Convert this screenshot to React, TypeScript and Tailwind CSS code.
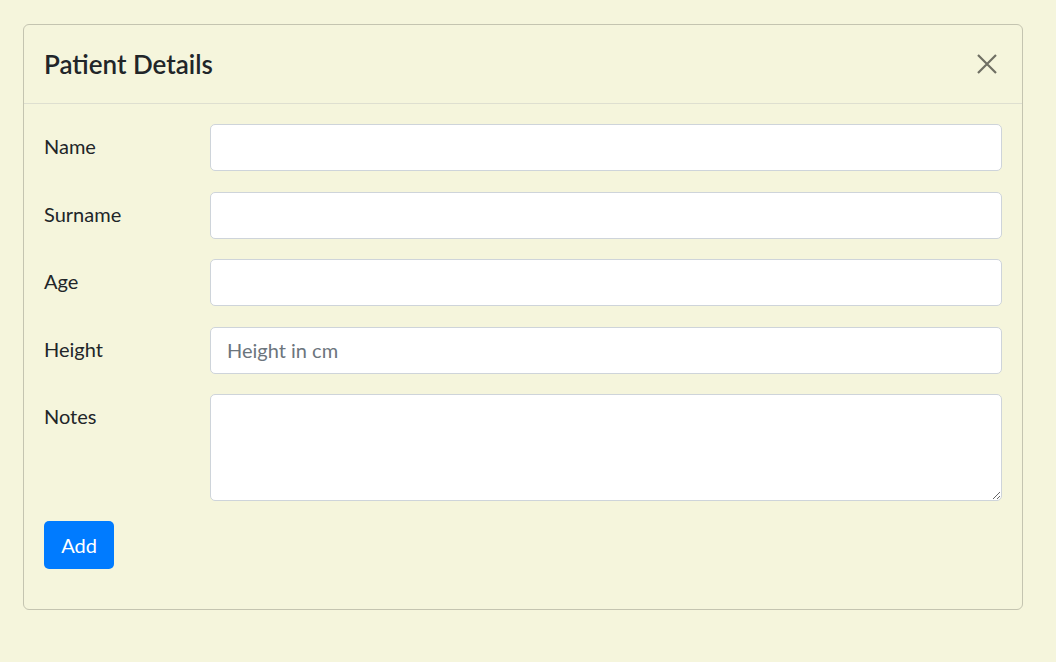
const fields = [
  { label: 'Name', placeholder: '' },
  { label: 'Surname', placeholder: '' },
  { label: 'Age', placeholder: '' },
  { label: 'Height', placeholder: 'Height in cm' },
];

export default function App() {
  return (
    <div
      className="min-h-[662px] bg-[#f5f5dc] pt-[24px] pl-[23px] text-[#212529]"
      style={{ fontFamily: 'Lato, "Noto Sans", sans-serif' }}
    >
      <div className="w-[1000px] rounded-[6px] border border-[#c4c4b0]">
        <div className="flex h-[79px] items-center justify-between border-b border-[#dedfd0] pl-[20px] pr-[24px]">
          <h5 className="text-[26px] font-semibold leading-none">Patient Details</h5>
          <button className="flex h-[22px] w-[22px] items-center justify-center text-[#6f6f63]">
            <svg width="22" height="22" viewBox="0 0 22 22" fill="none" stroke="currentColor" strokeWidth="2.2">
              <path d="M2 2 L20 20 M20 2 L2 20" />
            </svg>
          </button>
        </div>

        <div className="px-[20px] pt-[20px] pb-[40px]">
          {fields.map((f) => (
            <div key={f.label} className="mb-[20.5px] flex">
              <label className="flex h-[47px] w-[166px] items-center pb-[3px] text-[20px]">{f.label}</label>
              <input
                type="text"
                placeholder={f.placeholder}
                className="h-[47px] flex-1 rounded-[5px] border border-[#ced4da] bg-white px-[16px] text-[20px] placeholder:text-[#6c757d] outline-none"
              />
            </div>
          ))}
          <div className="mb-[20px] flex">
            <label className="flex h-[47px] w-[166px] items-center pb-[3px] text-[20px]">Notes</label>
            <textarea className="h-[107px] flex-1 rounded-[5px] border border-[#ced4da] bg-white px-[16px] py-[8px] text-[20px] outline-none" />
          </div>
          <button className="h-[48px] w-[70px] rounded-[5px] bg-[#007bff] text-[20px] text-white">Add</button>
        </div>
      </div>
    </div>
  );
}
